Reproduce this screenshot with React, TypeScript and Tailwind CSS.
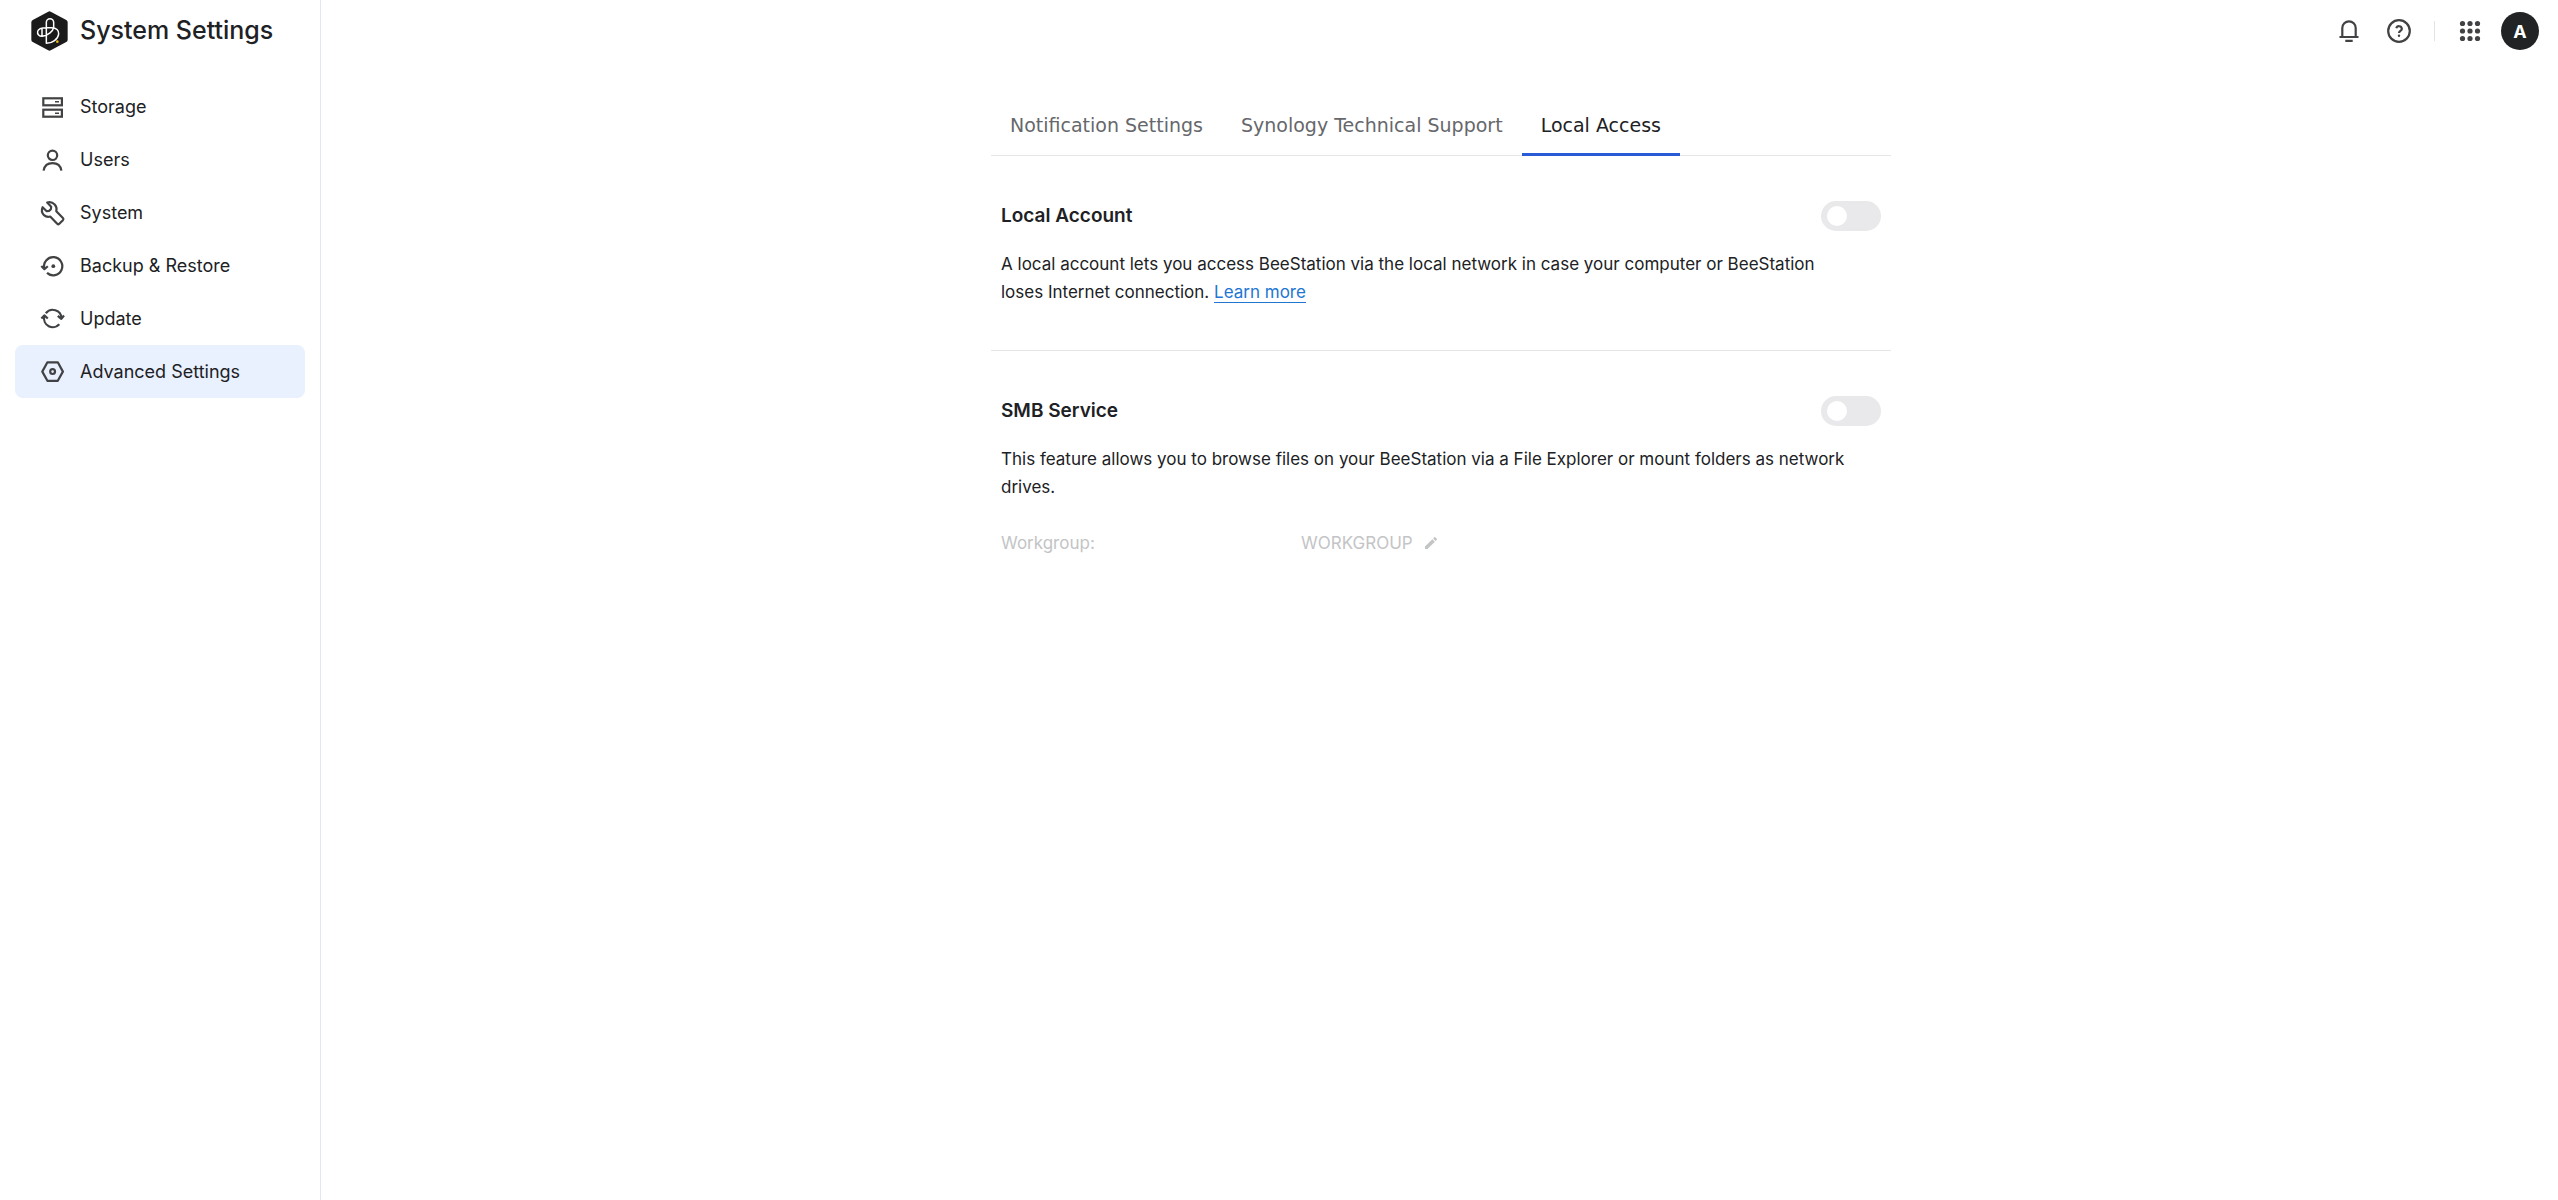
import React, { useState } from 'react'
import { MdEdit } from 'react-icons/md'

const Icon = ({ children }: { children: React.ReactNode }) => (
    <svg
        className="size-6 shrink-0 overflow-visible"
        viewBox="0 0 24 24"
        fill="none"
        stroke="#414244"
        strokeWidth="2.2"
        strokeLinejoin="round"
        aria-hidden="true"
    >
        {children}
    </svg>
)

const navItems = [
    {
        label: 'Storage',
        icon: (
            <Icon>
                <rect x="2.3" y="3.3" width="18.6" height="7" strokeLinejoin="miter" />
                <rect x="2.3" y="14.7" width="18.6" height="7" strokeLinejoin="miter" />
                <path d="M14 6.8h4M14 18.2h4" strokeWidth="1.6" />
            </Icon>
        ),
    },
    {
        label: 'Users',
        icon: (
            <Icon>
                <circle cx="11.5" cy="7.3" r="4.7" />
                <path d="M2.6 22.6C3.4 18 6.9 15.2 11.5 15.2s8.1 2.8 8.9 7.4" />
            </Icon>
        ),
    },
    {
        label: 'System',
        icon: (
            <Icon>
                <path d="M6.2 1.6 10.2 5.7 9.9 8.1 8 10 5.7 10.2 1.6 6.2C.4 8.9.9 12 3 14.1c1.7 1.6 4.1 2.1 6.2 1.4l7 7.2a1.5 1.5 0 0 0 2.1 0l3.6-3.5a1.5 1.5 0 0 0 0-2.1l-6.6-6.8c.7-2.4.1-4.9-1.6-6.8C11.7 1.5 8.8.7 6.2 1.6Z" />
            </Icon>
        ),
    },
    {
        label: 'Backup & Restore',
        icon: (
            <Icon>
                <path d="M3.3 14.2A9.1 9.1 0 1 1 6 18.9" />
                <path d="M.3 12l3.1 3.2L6.8 12.2" />
                <circle cx="12.3" cy="12.2" r="1.9" fill="#414244" stroke="none" />
            </Icon>
        ),
    },
    {
        label: 'Update',
        icon: (
            <Icon>
                <path d="M4.8 6.2A8.8 8.8 0 0 1 20.5 11.2" />
                <path d="M16.8 8.9l3.5 3L23 8.5" />
                <path d="M3.2 9.5A8.8 8.8 0 0 0 18.3 17.3" />
                <path d="M.4 11.5 3.3 8.4 6.8 11.5" />
            </Icon>
        ),
    },
    {
        label: 'Advanced Settings',
        icon: (
            <Icon>
                <path d="M6.4 2.3h10.4l5.1 9.3-5.1 9.2H6.4L1.3 11.6Z" />
                <circle cx="11.6" cy="11.6" r="2.4" />
            </Icon>
        ),
    },
]

const tabs = ['Notification Settings', 'Synology Technical Support', 'Local Access']

const Logo = () => (
    <svg className="h-10 w-[37px]" viewBox="0 0 111 120" fill="none" aria-hidden="true">
        <path
            d="M55.5 9 102 34v52L55.5 111 9 86V34Z"
            fill="#1b1b1b"
            stroke="#1b1b1b"
            strokeWidth="16"
            strokeLinejoin="round"
        />
        <path
            d="M46 97V34a11 11 0 0 1 22 0v15C66 62 50 73 34 76c-9 1-16-7-14-15 2-8 13-11 26-11h16c14 0 22 8 21 19-2 16-19 28-37 28Z M33 52v24"
            stroke="#fff"
            strokeWidth="4.5"
            strokeLinejoin="round"
        />
        <circle cx="79" cy="92" r="4" fill="#e8b41c" />
    </svg>
)

const Toggle = ({ id }: { id: string }) => (
    <input
        id={id}
        type="checkbox"
        role="switch"
        className="flex h-[30px] w-[60px] cursor-pointer appearance-none items-center rounded-full bg-[#e9e9eb] px-[6px] before:size-5 before:rounded-full before:bg-white checked:justify-end checked:bg-[#2a5bd7]"
    />
)

const App = () => {
    const [tab, setTab] = useState('Local Access')

    return (
        <div className="flex min-h-screen bg-white font-['Inter',sans-serif] text-[#202124]">
            <aside className="w-[321px] shrink-0 border-r border-[#e3e6ed]">
                <div className="flex h-[62px] items-center gap-3 pl-[31px]">
                    <Logo />
                    <h1 className="text-[25px] font-medium">System Settings</h1>
                </div>
                <nav className="mt-[18px] px-[15px]">
                    {navItems.map(({ label, icon }) => (
                        <a
                            key={label}
                            href="#"
                            className={`flex h-[53px] items-center gap-[15px] rounded-lg pl-[26px] text-[18px] ${
                                label === 'Advanced Settings' ? 'bg-[#e9f0fe]' : ''
                            }`}
                        >
                            {icon}
                            <span>{label}</span>
                        </a>
                    ))}
                </nav>
            </aside>

            <div className="flex-1">
                <header className="flex h-[62px] items-center justify-end pr-[19px]">
                    <button aria-label="Notifications">
                        <Icon>
                            <path d="M5.3 17.8V9a6.7 6.7 0 0 1 13.4 0v8.8" />
                            <path d="M2.5 18h19M8.3 21.9h7.4" />
                        </Icon>
                    </button>
                    <button aria-label="Help" className="ml-[26px]">
                        <Icon>
                            <circle cx="12" cy="12" r="10.8" />
                            <path d="M9.3 9.3a2.8 2.8 0 0 1 5.5.6c0 1.9-2.8 2.1-2.8 4" />
                            <circle cx="12" cy="16.7" r="1.2" fill="#414244" stroke="none" />
                        </Icon>
                    </button>
                    <div className="mx-[23px] h-5 w-px bg-[#e3e3e6]" />
                    <button aria-label="Apps">
                        <Icon>
                            <g fill="#414244" stroke="none">
                                {[4.5, 12, 19.5].map((y) =>
                                    [4.5, 12, 19.5].map((x) => <circle key={`${x}-${y}`} cx={x} cy={y} r="2.6" />)
                                )}
                            </g>
                        </Icon>
                    </button>
                    <button className="ml-[19px] size-[38px] rounded-full bg-[#222324] text-[18px] font-bold text-white">
                        A
                    </button>
                </header>

                <div className="pt-8 pl-[3px]">
                    <main className="mx-auto max-w-[900px]">
                        <div role="tablist" className="flex border-b border-[#e6e6e8] font-['DejaVu_Sans',sans-serif] text-[19px]">
                            {tabs.map((name) => (
                                <button
                                    key={name}
                                    role="tab"
                                    aria-selected={tab === name}
                                    onClick={() => setTab(name)}
                                    className={`-mb-px h-[62px] border-b-3 px-[19px] pt-1 ${
                                        tab === name ? 'border-[#2a5bd7] text-[#202124]' : 'border-transparent text-[#66676b]'
                                    }`}
                                >
                                    {name}
                                </button>
                            ))}
                        </div>

                        <section className="border-b border-[#e6e6e8] px-[10px] pt-[45px] pb-[44px]">
                            <div className="flex items-center justify-between">
                                <label htmlFor="local-account" className="text-[19px] font-semibold">Local Account</label>
                                <Toggle id="local-account" />
                            </div>
                            <p className="mt-[19px] text-[17px] leading-7">
                                A local account lets you access BeeStation via the local network in case your computer or BeeStation
                                <br />
                                loses Internet connection.{' '}
                                <a href="#" className="border-b border-[#2176d2] text-[#2176d2]">Learn more</a>
                            </p>
                        </section>

                        <section className="px-[10px] pt-[45px]">
                            <div className="flex items-center justify-between">
                                <label htmlFor="smb-service" className="text-[19px] font-semibold">SMB Service</label>
                                <Toggle id="smb-service" />
                            </div>
                            <p className="mt-[19px] text-[17px] leading-7">
                                This feature allows you to browse files on your BeeStation via a File Explorer or mount folders as network
                                <br />
                                drives.
                            </p>
                            <div className="mt-7 flex items-center text-[17px] leading-7 text-[#c3c4c6]">
                                <p className="w-[300px]">Workgroup:</p>
                                <p>WORKGROUP</p>
                                <button disabled aria-label="Edit workgroup" className="ml-[10px]">
                                    <MdEdit className="size-4" />
                                </button>
                            </div>
                        </section>
                    </main>
                </div>
            </div>
        </div>
    )
}

export default App
